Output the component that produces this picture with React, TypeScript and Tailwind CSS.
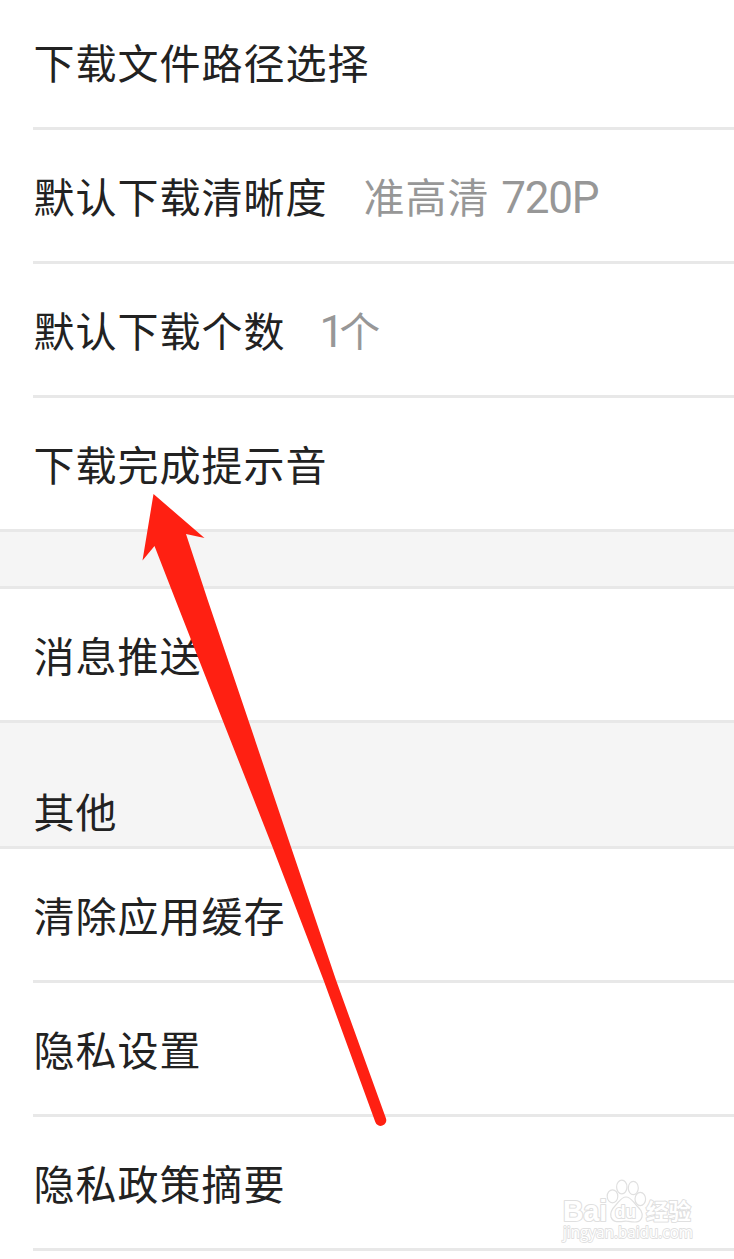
import type { ReactNode } from "react";

function Row({ label, value }: { label: string; value?: ReactNode }) {
  return (
    <div className="pl-[33px]">
      <div className="flex h-[134px] items-center whitespace-nowrap border-b-[3px] border-[#e8e8e8] pb-[2px] pl-[0.5px]">
        <span>{label}</span>
        {value && <span className="ml-[36px] text-[#979797]">{value}</span>}
      </div>
    </div>
  );
}

function Watermark() {
  return (
    <svg
      className="absolute left-[550px] top-[1165px] tracking-normal"
      width="184"
      height="80"
      viewBox="0 0 184 80"
      fill="#ffffff"
      stroke="#e0e0e0"
      strokeWidth="1.2"
      strokeLinejoin="round"
      fontFamily="'Liberation Sans', 'Noto Sans CJK SC', sans-serif"
    >
      <text x="13" y="55.500" fontSize="29" fontWeight="700" textLength="44" lengthAdjust="spacingAndGlyphs" strokeWidth="2.2" paintOrder="stroke">Bai</text>
      <ellipse cx="62.5" cy="31.3" rx="5.3" ry="6.5" />
      <ellipse cx="71.8" cy="22" rx="5.2" ry="6.8" />
      <ellipse cx="83.3" cy="23" rx="5" ry="6.7" />
      <ellipse cx="90.3" cy="34" rx="5.3" ry="6.7" />
      <path d="M76 32C71 32 69 37 65 41C61 45 60 48 61 52C63 58 69 57 76 56C83 57 90 59 92 52C93 47 90 44 87 41C83 37 81 32 76 32Z" />
      <text x="65" y="53" fontSize="19" fontWeight="700" textLength="21" lengthAdjust="spacingAndGlyphs" strokeWidth="2" paintOrder="stroke">du</text>
      <text x="96" y="54" fontSize="22" fontWeight="700" textLength="45" lengthAdjust="spacingAndGlyphs" strokeWidth="2" paintOrder="stroke" fontFamily="'Noto Sans CJK SC', sans-serif">经验</text>
      <text x="13" y="73" fontSize="16" textLength="130" lengthAdjust="spacingAndGlyphs" strokeWidth="1.8" paintOrder="stroke" fontFamily="'Open Sans', sans-serif">jingyan.baidu.com</text>
    </svg>
  );
}

export default function App() {
  return (
    <main className="relative h-[1259px] w-[734px] overflow-hidden bg-white font-['Noto_Sans_CJK_SC',sans-serif] text-[41px] leading-[60px] tracking-[1px] text-[#222222]">
      <section className="-mt-[4px]">
        <Row label="下载文件路径选择" />
        <Row
          label="默认下载清晰度"
          value={
            <>
              准高清
              <span className="ml-[2px] font-[Roboto,sans-serif] text-[44px] leading-[1] tracking-[-1.2px]"> 720P</span>
            </>
          }
        />
        <Row
          label="默认下载个数"
          value={
            <>
              <span className="-ml-[2px] font-[Roboto,sans-serif] text-[44px] leading-[1] tracking-[-5px]">1</span>
              个
            </>
          }
        />
        <div className="flex h-[131px] items-center pb-[2px] pl-[33.5px]">下载完成提示音</div>
      </section>
      <div className="h-[60px] border-y-[3px] border-[#e8e8e8] bg-[#f5f5f5]" />
      <section className="flex h-[131px] items-center pb-[2px] pl-[33.5px]">消息推送</section>
      <header className="flex h-[129px] items-end border-y-[3px] border-[#e8e8e8] bg-[#f5f5f5] pb-[6px] pl-[33.5px]">
        其他
      </header>
      <section>
        <Row label="清除应用缓存" />
        <Row label="隐私设置" />
        <Row label="隐私政策摘要" />
      </section>
      <Watermark />
      <svg className="absolute left-0 top-0" width="734" height="1259" viewBox="0 0 734 1259" fill="#ff2012">
        <path d="M153.5 494L204.5 538L186 534L207.7 600L250 725L291 847L336 980L386 1118.500A5.6 5.6 0 0 1 375.3 1122L323.500 980L272.500 847L222.500 720L175.500 600L154.500 546L142.500 560.500Z" />
      </svg>
    </main>
  );
}
